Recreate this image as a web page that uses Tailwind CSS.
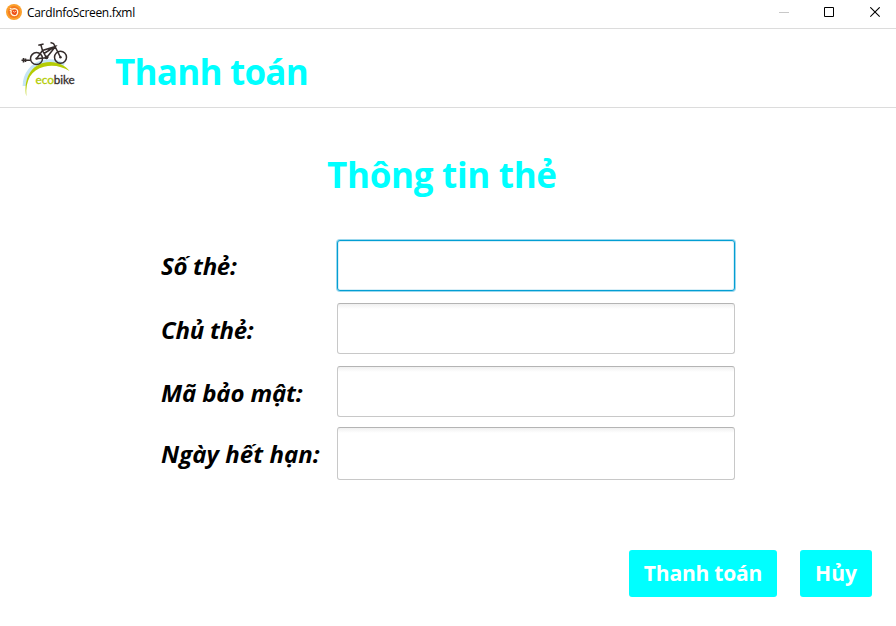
<!DOCTYPE html>
<html lang="vi">
<head>
<meta charset="utf-8">
<title>CardInfoScreen.fxml</title>
<script src="https://cdn.jsdelivr.net/npm/@tailwindcss/browser@4"></script>
</head>
<body class="bg-white">
<div class="flex h-[626px] w-[896px] flex-col overflow-hidden bg-white font-['Open_Sans','Noto_Sans',sans-serif] text-black">
  <div class="flex h-[29px] shrink-0 items-start border-b border-[#dcdcdc]">
    <svg class="mt-1 ml-[6px] size-4 shrink-0" viewBox="0 0 16 16" fill="none">
      <circle cx="8" cy="8" r="8" fill="#fba02c"/>
      <circle cx="8" cy="8" r="6" fill="#f47a20"/>
      <circle cx="8.500" cy="8.300" r="2.600" fill="#ee4e1a"/>
      <path d="M3.800 4.200L6 5.200C8 4.300 10 4.600 11.400 6.200C12 8 11.500 10 10.200 11.200C8 12 6.200 11.400 5.200 9.600C4.800 8.600 4.900 7.600 5.200 6.900L3.800 6" stroke="#fff3dc" stroke-width="1.200"/>
      <path d="M7 7.200l1.400 1 1.600-1" stroke="#ffe0b0" stroke-width=".8"/>
    </svg>
    <span class="mt-[5px] ml-[5px] w-[109px] text-[12px] leading-4 tracking-[-0.33px] whitespace-nowrap">CardInfoScreen.fxml</span>
    <div class="mt-[7px] mr-[15px] ml-auto flex gap-[35px]">
      <svg class="h-[11px] w-[11px]" viewBox="0 0 11 11"><path d="M1 5.500h10" stroke="#c8c8c8"/></svg>
      <svg class="h-[11px] w-[11px]" viewBox="0 0 11 11"><path d="M.5.5h9v9h-9z" fill="none" stroke="#000"/></svg>
      <svg class="h-[11px] w-[11px]" viewBox="0 0 11 11"><path d="M.3.3l9.400 9.400M9.700.3L.3 9.700" stroke="#000" stroke-width="1.100"/></svg>
    </div>
  </div>

  <header class="flex h-[79px] shrink-0 items-start border-b border-[#dcdcdc]">
    <svg class="mt-[7px] ml-[16px] h-[64px] w-[64px] shrink-0" viewBox="16 36 64 64" fill="none">
      <path d="M24.300 86C24.300 74 32 64 44 61.500C51 60.300 59 62 64 65" stroke="#c5e4f5" stroke-width="3.400"/>
      <path d="M26.300 96.500C23.500 80 29.500 67 43 63C54 60 64 64 69.500 71C62 66.500 53 64.300 44 66.800C31 70 25.500 80 26.300 96.500z" fill="#b4cc04"/>
      <g stroke="#352d2c" stroke-width="1.500">
        <circle cx="36.500" cy="58.600" r="6"/>
        <circle cx="60.500" cy="57.300" r="6"/>
        <path d="M36.500 58.800L42.500 50.500L55.500 46.500L46.500 57.800L42.500 50.500L41 45.200M38.300 45.200l5.300-1.200M36.500 58.800l10-1M60.500 57.300L53.500 43.500l-3-1M53.500 43.500l1.700 3L44 53.500"/>
        <path d="M21.500 60.300h9M23.500 58v4.500M25.500 58.500v3.500" stroke-width="1.600"/>
      </g>
      <circle cx="36.500" cy="58.600" r="1.200" fill="#352d2c"/>
      <circle cx="60.500" cy="57.300" r="1.200" fill="#352d2c"/>
      <circle cx="46.500" cy="57.300" r="1.900" fill="#352d2c"/>
      <g font-family="Lato, sans-serif" font-size="11" stroke-width=".3">
        <text x="0" y="0" transform="translate(35.500 84) scale(1.080 1)" fill="#b4cc04" stroke="#b4cc04">eco</text>
        <text x="0" y="0" transform="translate(53.700 84) scale(1.060 1)" fill="#352d2c" stroke="#352d2c">bike</text>
      </g>
    </svg>
    <h1 class="mt-[18px] ml-[35px] text-[35px] leading-[49px] font-bold tracking-[-0.75px] whitespace-nowrap text-[#00ffff]">Thanh toán</h1>
  </header>

  <main class="flex flex-1 flex-col">
    <h2 class="mt-[42px] ml-[327px] text-[35px] leading-[49px] font-bold tracking-[-0.3px] whitespace-nowrap text-[#00ffff]">Thông tin thẻ</h2>
    <form class="mt-[41px] ml-[161px] flex w-[574px] flex-col text-[24px] font-bold italic">
      <div class="flex h-[51px] items-center"><label class="w-[176px] pt-px leading-8 tracking-[-0.3px] whitespace-nowrap">Số thẻ:</label><input class="h-[51px] w-[398px] rounded-[3px] border border-[#039ed3] bg-white shadow-[0_0_0_1px_#9bd8ee,inset_0_0_0_1px_#d9eff7] outline-none"></div>
      <div class="mt-[12px] flex h-[51px] items-center"><label class="w-[176px] pt-0.5 leading-8 tracking-[-0.25px] whitespace-nowrap">Chủ thẻ:</label><input class="h-[51px] w-[398px] rounded-[3px] border border-[#c8c8c8] border-t-[#b4b4b4] bg-linear-to-b from-[#f0f0f0] to-white to-[5px]"></div>
      <div class="mt-[12px] flex h-[51px] items-center"><label class="w-[176px] pt-0.5 leading-8 tracking-[-0.15px] whitespace-nowrap">Mã bảo mật:</label><input class="h-[51px] w-[398px] rounded-[3px] border border-[#c8c8c8] border-t-[#b4b4b4] bg-linear-to-b from-[#f0f0f0] to-white to-[5px]"></div>
      <div class="mt-[10px] flex h-[53px] items-center"><label class="w-[176px] leading-8 tracking-[0.05px] whitespace-nowrap">Ngày hết hạn:</label><input class="h-[53px] w-[398px] rounded-[3px] border border-[#c8c8c8] border-t-[#b4b4b4] bg-linear-to-b from-[#f0f0f0] to-white to-[5px]"></div>
    </form>
    <div class="mt-[70px] mr-6 flex justify-end gap-[23px] text-[21px] font-bold text-white">
      <button class="h-[47px] w-[148px] rounded-[3px] bg-[#00ffff] tracking-[-0.2px] whitespace-nowrap">Thanh toán</button>
      <button class="h-[47px] w-[72px] rounded-[3px] bg-[#00ffff] whitespace-nowrap">Hủy</button>
    </div>
  </main>
</div>
</body>
</html>
